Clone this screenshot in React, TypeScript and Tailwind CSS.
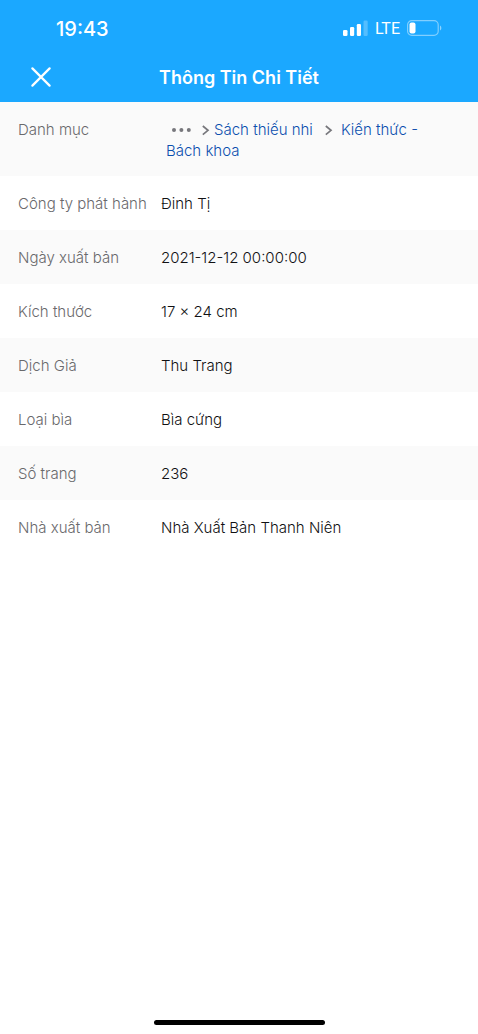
import type { JSX, ReactNode } from "react";

interface DetailRow {
  label: string;
  value: ReactNode;
}

const DETAILS: DetailRow[] = [
  { label: "Danh mục", value: <CategoryPath /> },
  { label: "Công ty phát hành", value: "Đinh Tị" },
  { label: "Ngày xuất bản", value: "2021-12-12 00:00:00" },
  { label: "Kích thước", value: "17 × 24 cm" },
  { label: "Dịch Giả", value: "Thu Trang" },
  { label: "Loại bìa", value: "Bìa cứng" },
  { label: "Số trang", value: "236" },
  { label: "Nhà xuất bản", value: "Nhà Xuất Bản Thanh Niên" },
];

export default function App(): JSX.Element {
  return (
    <div className="flex min-h-screen flex-col bg-white font-['Inter','Noto_Sans',sans-serif] text-[#111113]">
      <header className="bg-[#1ba8ff] text-white">
        <StatusBar />
        <TitleBar />
      </header>
      <main className="flex-1">
        <DetailTable />
      </main>
      <footer className="flex justify-center pb-[9px]">
        <div className="h-[5px] w-[171px] rounded-full bg-black" />
      </footer>
    </div>
  );
}

function StatusBar(): JSX.Element {
  return (
    <div className="flex h-[52px] items-center justify-between pt-1 pr-9 pl-14">
      <span className="pt-0.5 text-xl font-medium">19:43</span>
      <div className="flex items-center gap-[7px]">
        <SignalIcon />
        <span className="pt-0.5 font-['Roboto',sans-serif] text-base leading-5">LTE</span>
        <BatteryIcon />
      </div>
    </div>
  );
}

function SignalIcon(): JSX.Element {
  return (
    <svg width="25" height="16" viewBox="0 0 25 16" fill="currentColor" aria-hidden="true">
      <rect x="0" y="10" width="4.5" height="6" rx="1.3" />
      <rect x="7" y="7" width="4.2" height="9" rx="1.2" />
      <rect x="13.8" y="4" width="4.2" height="12" rx="1.2" />
      <rect x="20.5" y="0.5" width="4.2" height="15.5" rx="1.2" opacity="0.25" />
    </svg>
  );
}

function BatteryIcon(): JSX.Element {
  return (
    <svg width="35" height="16" viewBox="0 0 35 16" fill="none" aria-hidden="true">
      <rect x="0.6" y="0.6" width="30.6" height="14.8" rx="4.2" stroke="white" strokeWidth="1.2" opacity="0.45" />
      <rect x="2.5" y="2.5" width="6" height="11" rx="2" fill="white" />
      <path d="M33 5.5C34.8 6.3 34.8 9.7 33 10.5Z" fill="white" opacity="0.5" />
    </svg>
  );
}

function TitleBar(): JSX.Element {
  return (
    <div className="grid h-[50px] grid-cols-[80px_1fr_80px] items-center">
      <button type="button" aria-label="Đóng" className="ml-[31px] w-fit">
        <svg width="20" height="20" viewBox="0 0 20 20" fill="none" stroke="currentColor" strokeWidth="2.2" strokeLinecap="round" aria-hidden="true">
          <path d="M1.4 1.4L18.6 18.6M18.6 1.4L1.4 18.6" />
        </svg>
      </button>
      <h1 className="pt-px text-center text-lg font-semibold">Thông Tin Chi Tiết</h1>
    </div>
  );
}

function DetailTable(): JSX.Element {
  return (
    <table className="w-full table-fixed text-left text-[15px] leading-[21px] font-light">
      <colgroup>
        <col className="w-[161px]" />
        <col />
      </colgroup>
      <tbody>
        {DETAILS.map((row) => (
          <tr key={row.label} className="h-[54px] align-top odd:bg-[#fafafa]">
            <th scope="row" className="pt-[17px] pb-[15px] pl-[18px] font-light text-[#69696c]">
              {row.label}
            </th>
            <td className="pt-[17px] pr-12 pb-[15px]">{row.value}</td>
          </tr>
        ))}
      </tbody>
    </table>
  );
}

function CategoryPath(): JSX.Element {
  return (
    <nav aria-label="Danh mục" className="pl-[5px] text-[#0b4fae]">
      <button type="button" aria-label="Xem thêm" className="mr-2 ml-[5px] text-[#77777c]">
        <svg width="22" height="10" viewBox="0 0 22 10" fill="currentColor" aria-hidden="true">
          <circle cx="3" cy="5" r="2" />
          <circle cx="10.4" cy="5" r="2" />
          <circle cx="17.8" cy="5" r="2" />
        </svg>
      </button>
      <Separator />
      <a href="#" className="mr-[11px] ml-1">
        Sách thiếu nhi
      </a>
      <Separator />
      <a href="#" className="ml-2">
        Kiến thức - Bách khoa
      </a>
    </nav>
  );
}

function Separator(): JSX.Element {
  return (
    <svg
      className="inline-block align-middle text-[#77777c]"
      width="9"
      height="12"
      viewBox="0 0 9 12"
      fill="none"
      stroke="currentColor"
      strokeWidth="1.7"
      aria-hidden="true"
    >
      <path d="M1.8 1L7 5.3L1.8 9.6" />
    </svg>
  );
}
